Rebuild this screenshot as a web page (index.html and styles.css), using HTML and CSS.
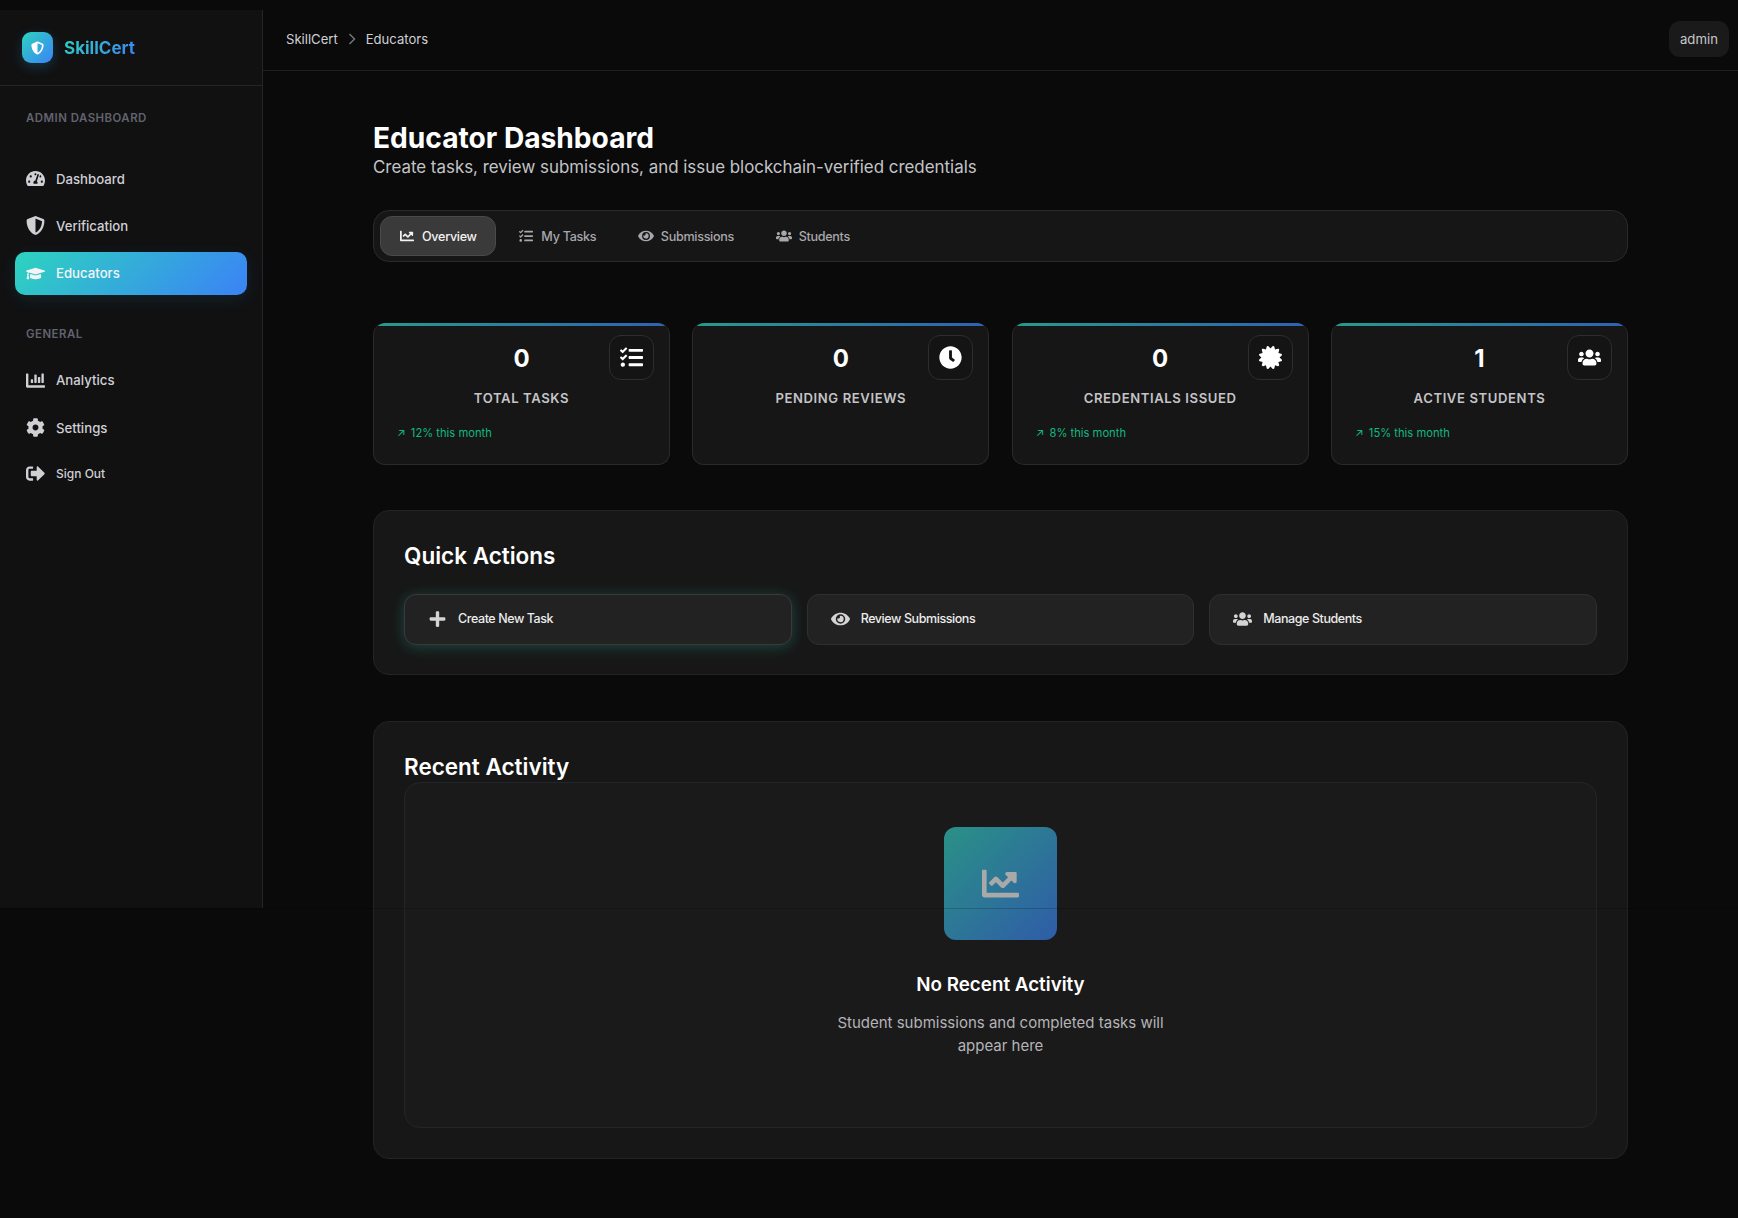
FILE: index.html
```html
<!DOCTYPE html>
<html lang="en">
<head>
    <meta charset="UTF-8">
    <meta name="viewport" content="width=device-width, initial-scale=1.0">
    <title>SkillCert - Educator Dashboard</title>
    <link rel="stylesheet" href="styles.css">
</head>
<body>

    <!-- Icon sprite -->
    <svg class="sprite" xmlns="http://www.w3.org/2000/svg">
        <symbol id="i-shield" viewBox="0 0 512 512"><path d="M466.5 83.7l-192-80a48.15 48.15 0 0 0-36.9 0l-192 80C27.7 91.1 16 108.6 16 128c0 198.5 114.5 335.7 221.5 380.3 11.8 4.9 25.1 4.9 36.9 0C360.1 472.6 496 349.3 496 128c0-19.4-11.7-36.9-29.5-44.3zM256.1 446.3l-.1-381 175.9 73.3c-3.3 151.4-82.1 261.1-175.8 307.7z"/></symbol>
        <symbol id="i-gauge" viewBox="0 0 576 512"><path d="M288 32C128.94 32 0 160.94 0 320c0 52.8 14.25 102.26 39.06 144.8 5.61 9.62 16.3 15.2 27.44 15.2h443c11.14 0 21.83-5.58 27.44-15.2C561.75 422.26 576 372.8 576 320c0-159.06-128.94-288-288-288zm0 64c14.71 0 26.58 10.13 30.32 23.65-1.11 2.26-2.64 4.23-3.45 6.67l-9.22 27.67c-5.13 3.49-10.97 6.01-17.64 6.01-17.67 0-32-14.33-32-32S270.33 96 288 96zM96 384c-17.67 0-32-14.33-32-32s14.33-32 32-32 32 14.33 32 32-14.33 32-32 32zm48-160c-17.67 0-32-14.33-32-32s14.33-32 32-32 32 14.33 32 32-14.33 32-32 32zm246.77-72.41l-61.33 184C343.13 347.33 352 364.54 352 384c0 11.72-3.38 22.55-8.88 32H232.88c-5.5-9.45-8.88-20.28-8.88-32 0-33.94 26.5-61.43 59.9-63.59l61.34-184.01c4.17-12.56 17.73-19.45 30.36-15.17 12.57 4.19 19.35 17.79 15.17 30.36zm14.66 57.2l15.52-46.55c3.47-1.29 7.13-2.23 11.05-2.23 17.67 0 32 14.33 32 32s-14.33 32-32 32c-11.38-.01-20.89-6.28-26.57-15.22zM480 384c-17.67 0-32-14.33-32-32s14.33-32 32-32 32 14.33 32 32-14.33 32-32 32z"/></symbol>
        <symbol id="i-cap" viewBox="0 0 640 512"><path d="M622.34 153.2L343.4 67.5c-15.2-4.67-31.6-4.67-46.79 0L17.66 153.2c-23.54 7.23-23.54 38.36 0 45.59l48.63 14.94c-10.67 13.19-17.23 29.28-17.88 46.9C38.78 266.15 32 276.11 32 288c0 10.78 5.68 19.85 13.86 25.65L20.33 428.53C18.11 438.52 25.71 448 35.94 448h56.11c10.24 0 17.84-9.48 15.62-19.47L82.14 313.65C90.32 307.85 96 298.78 96 288c0-11.57-6.47-21.25-15.66-26.87.76-15.02 8.44-28.3 20.69-36.72L296.6 284.5c9.06 2.78 26.44 6.25 46.79 0l278.95-85.7c23.55-7.24 23.55-38.36 0-45.6zM352.79 315.09c-28.53 8.76-52.84 3.92-65.59 0l-145.02-44.55L128 384c0 35.35 85.96 64 192 64s192-28.65 192-64l-14.18-113.47-145.03 44.56z"/></symbol>
        <symbol id="i-bars" viewBox="0 0 512 512"><path d="M332.8 320h38.4c6.4 0 12.8-6.4 12.8-12.8V172.8c0-6.4-6.4-12.8-12.8-12.8h-38.4c-6.4 0-12.8 6.4-12.8 12.8v134.4c0 6.4 6.4 12.8 12.8 12.8zm96 0h38.4c6.4 0 12.8-6.4 12.8-12.8V76.8c0-6.4-6.4-12.8-12.8-12.8h-38.4c-6.4 0-12.8 6.4-12.8 12.8v230.4c0 6.4 6.4 12.8 12.8 12.8zm-288 0h38.4c6.4 0 12.8-6.4 12.8-12.8v-70.4c0-6.4-6.4-12.8-12.8-12.8h-38.4c-6.4 0-12.8 6.4-12.8 12.8v70.4c0 6.4 6.4 12.8 12.8 12.8zm96 0h38.4c6.4 0 12.8-6.4 12.8-12.8V108.8c0-6.4-6.4-12.8-12.8-12.8h-38.4c-6.4 0-12.8 6.4-12.8 12.8v198.4c0 6.4 6.4 12.8 12.8 12.8zM496 384H64V80c0-8.84-7.16-16-16-16H16C7.16 64 0 71.16 0 80v336c0 17.67 14.33 32 32 32h464c8.84 0 16-7.16 16-16v-32c0-8.84-7.16-16-16-16z"/></symbol>
        <symbol id="i-cog" viewBox="0 0 512 512"><path d="M487.4 315.7l-42.6-24.6c4.3-23.2 4.3-47 0-70.2l42.6-24.6c4.9-2.8 7.1-8.6 5.5-14-11.1-35.6-30-67.8-54.7-94.6-3.8-4.1-10-5.1-14.8-2.3L380.8 110c-17.9-15.4-38.5-27.3-60.8-35.1V25.8c0-5.6-3.9-10.5-9.4-11.7-36.7-8.2-74.3-7.8-109.2 0-5.5 1.2-9.4 6.1-9.4 11.7V75c-22.2 7.9-42.8 19.8-60.8 35.1L88.7 85.5c-4.9-2.8-11-1.9-14.8 2.3-24.7 26.7-43.6 58.9-54.7 94.6-1.7 5.4.6 11.2 5.5 14L67.3 221c-4.3 23.2-4.3 47 0 70.2l-42.6 24.6c-4.9 2.8-7.1 8.6-5.5 14 11.1 35.6 30 67.8 54.7 94.6 3.8 4.1 10 5.1 14.8 2.3l42.6-24.6c17.9 15.4 38.5 27.3 60.8 35.1v49.2c0 5.6 3.9 10.5 9.4 11.7 36.7 8.2 74.3 7.8 109.2 0 5.5-1.2 9.4-6.1 9.4-11.7v-49.2c22.2-7.9 42.8-19.8 60.8-35.1l42.6 24.6c4.9 2.8 11 1.9 14.8-2.3 24.7-26.7 43.6-58.9 54.7-94.6 1.5-5.5-.7-11.3-5.6-14.1zM256 336c-44.1 0-80-35.9-80-80s35.9-80 80-80 80 35.9 80 80-35.9 80-80 80z"/></symbol>
        <symbol id="i-signout" viewBox="0 0 512 512"><path d="M497 273L329 441c-15 15-41 4.5-41-17v-96H152c-13.3 0-24-10.7-24-24v-96c0-13.3 10.7-24 24-24h136V88c0-21.4 25.9-32 41-17l168 168c9.3 9.4 9.3 24.6 0 34zM192 436v-40c0-6.6-5.4-12-12-12H96c-17.7 0-32-14.3-32-32V160c0-17.7 14.3-32 32-32h84c6.6 0 12-5.4 12-12V76c0-6.6-5.4-12-12-12H96c-53 0-96 43-96 96v192c0 53 43 96 96 96h84c6.6 0 12-5.4 12-12z"/></symbol>
        <symbol id="i-chart" viewBox="0 0 512 512"><path d="M496 384H64V80c0-8.84-7.16-16-16-16H16C7.16 64 0 71.16 0 80v336c0 17.67 14.33 32 32 32h464c8.84 0 16-7.16 16-16v-32c0-8.84-7.16-16-16-16zM464 96H345.94c-21.38 0-32.09 25.85-16.97 40.97l32.4 32.4L288 242.75l-73.37-73.37c-12.5-12.5-32.76-12.5-45.25 0l-68.69 68.69c-6.25 6.25-6.25 16.38 0 22.63l22.62 22.62c6.25 6.25 16.38 6.25 22.63 0L192 237.25l73.37 73.37c12.5 12.5 32.76 12.5 45.25 0l96-96 32.4 32.4c15.12 15.12 40.97 4.41 40.97-16.97V112c.01-8.84-7.15-16-15.99-16z"/></symbol>
        <symbol id="i-tasks" viewBox="0 0 512 512"><path d="M139.61 35.5a12 12 0 0 0-17 0L58.93 98.81l-22.7-22.12a12 12 0 0 0-17 0L3.53 92.41a12 12 0 0 0 0 17l47.59 47.4a12.78 12.78 0 0 0 17.61 0l15.59-15.62L156.52 69a12.09 12.09 0 0 0 .09-17zm0 159.19a12 12 0 0 0-17 0l-63.68 63.72-22.7-22.1a12 12 0 0 0-17 0L3.53 252a12 12 0 0 0 0 17L51 316.5a12.77 12.77 0 0 0 17.6 0l15.7-15.69 72.2-72.22a12 12 0 0 0 .09-16.9zM64 368c-26.49 0-48.59 21.5-48.59 48S37.53 464 64 464a48 48 0 0 0 0-96zm432 16H208a16 16 0 0 0-16 16v32a16 16 0 0 0 16 16h288a16 16 0 0 0 16-16v-32a16 16 0 0 0-16-16zm0-320H208a16 16 0 0 0-16 16v32a16 16 0 0 0 16 16h288a16 16 0 0 0 16-16V80a16 16 0 0 0-16-16zm0 160H208a16 16 0 0 0-16 16v32a16 16 0 0 0 16 16h288a16 16 0 0 0 16-16v-32a16 16 0 0 0-16-16z"/></symbol>
        <symbol id="i-eye" viewBox="0 0 576 512"><path d="M572.52 241.4C518.29 135.59 410.93 64 288 64S57.68 135.64 3.48 241.41a32.35 32.35 0 0 0 0 29.19C57.71 376.41 165.07 448 288 448s230.32-71.64 284.52-177.41a32.35 32.35 0 0 0 0-29.19zM288 400a144 144 0 1 1 144-144 143.93 143.93 0 0 1-144 144zm0-240a95.31 95.31 0 0 0-25.31 3.79 47.85 47.85 0 0 1-66.9 66.9A95.78 95.78 0 1 0 288 160z"/></symbol>
        <symbol id="i-users" viewBox="0 0 640 512"><path d="M96 224c35.3 0 64-28.7 64-64s-28.7-64-64-64-64 28.7-64 64 28.7 64 64 64zm448 0c35.3 0 64-28.7 64-64s-28.7-64-64-64-64 28.7-64 64 28.7 64 64 64zm32 32h-64c-17.6 0-33.5 7.1-45.1 18.6 40.3 22.1 68.9 62 75.1 109.4h66c17.7 0 32-14.3 32-32v-32c0-35.3-28.7-64-64-64zm-256 0c61.9 0 112-50.1 112-112S381.9 32 320 32 208 82.1 208 144s50.1 112 112 112zm76.8 32h-8.3c-20.8 10-43.9 16-68.5 16s-47.6-6-68.5-16h-8.3C179.6 288 128 339.6 128 403.2V432c0 26.5 21.5 48 48 48h288c26.5 0 48-21.5 48-48v-28.8c0-63.6-51.6-115.2-115.2-115.2zm-223.7-13.4C161.5 263.1 145.6 256 128 256H64c-35.3 0-64 28.7-64 64v32c0 17.7 14.3 32 32 32h65.9c6.3-47.4 34.9-87.3 75.2-109.4z"/></symbol>
        <symbol id="i-clock" viewBox="0 0 512 512"><path d="M256,8C119,8,8,119,8,256S119,504,256,504,504,393,504,256,393,8,256,8Zm92.49,313h0l-20,25a16,16,0,0,1-22.49,2.5h0l-67-49.72a40,40,0,0,1-15-31.23V112a16,16,0,0,1,16-16h32a16,16,0,0,1,16,16V256l58,42.5A16,16,0,0,1,348.49,321Z"/></symbol>
        <symbol id="i-cert" viewBox="0 0 512 512"><path d="M458.622 255.92l45.985-45.005c13.708-12.977 7.316-36.039-10.664-40.339l-62.65-15.99 17.661-62.015c4.991-17.838-11.829-34.663-29.661-29.671l-61.994 17.667-15.984-62.671C337.085.197 313.765-6.276 300.99 7.228L256 53.57 211.011 7.229c-12.63-13.351-36.047-7.234-40.325 10.668l-15.984 62.671-61.995-17.667C74.87 57.907 58.056 74.738 63.046 92.572l17.661 62.015-62.65 15.99C.069 174.878-6.31 197.944 7.392 210.915l45.985 45.005-45.985 45.004c-13.708 12.977-7.316 36.039 10.664 40.339l62.65 15.99-17.661 62.015c-4.991 17.838 11.829 34.663 29.661 29.671l61.994-17.667 15.984 62.671c4.439 18.575 27.696 24.018 40.325 10.668L256 458.61l44.989 46.001c12.5 13.488 35.987 7.486 40.325-10.668l15.984-62.671 61.994 17.667c17.836 4.994 34.651-11.837 29.661-29.671l-17.661-62.015 62.65-15.99c17.987-4.302 24.366-27.367 10.664-40.339l-45.984-45.004z"/></symbol>
        <symbol id="i-plus" viewBox="0 0 448 512"><path d="M416 208H272V64c0-17.67-14.33-32-32-32h-32c-17.67 0-32 14.33-32 32v144H32c-17.67 0-32 14.33-32 32v32c0 17.67 14.33 32 32 32h144v144c0 17.67 14.33 32 32 32h32c17.67 0 32-14.33 32-32V304h144c17.67 0 32-14.33 32-32v-32c0-17.67-14.33-32-32-32z"/></symbol>
    </svg>

    <div class="layout">

        <!-- Sidebar -->
        <aside class="sidebar">
            <div class="brand">
                <span class="brand-logo"><svg class="icon"><use href="#i-shield"/></svg></span>
                <span class="brand-name">SkillCert</span>
            </div>
            <nav class="nav">
                <div class="nav-label">Admin Dashboard</div>
                <a class="nav-item" href="#"><svg class="icon"><use href="#i-gauge"/></svg>Dashboard</a>
                <a class="nav-item" href="#"><svg class="icon"><use href="#i-shield"/></svg>Verification</a>
                <a class="nav-item active" href="#"><svg class="icon"><use href="#i-cap"/></svg>Educators</a>
                <div class="nav-label general">General</div>
                <a class="nav-item" href="#"><svg class="icon"><use href="#i-bars"/></svg>Analytics</a>
                <a class="nav-item" href="#"><svg class="icon"><use href="#i-cog"/></svg>Settings</a>
                <a class="nav-item small" href="#"><svg class="icon"><use href="#i-signout"/></svg>Sign Out</a>
            </nav>
        </aside>

        <div class="main">
            <!-- Top bar -->
            <header class="topbar">
                <div class="crumbs">
                    <span>SkillCert</span>
                    <svg class="crumb-sep" viewBox="0 0 8 12"><path d="M1.5 1l5 5-5 5"/></svg>
                    <span>Educators</span>
                </div>
                <span class="user-pill">admin</span>
            </header>

            <main class="content">
                <h1 class="page-title">Educator Dashboard</h1>
                <p class="page-sub">Create tasks, review submissions, and issue blockchain-verified credentials</p>

                <div class="tabs">
                    <button class="tab active"><svg class="icon"><use href="#i-chart"/></svg>Overview</button>
                    <button class="tab"><svg class="icon"><use href="#i-tasks"/></svg>My Tasks</button>
                    <button class="tab"><svg class="icon"><use href="#i-eye"/></svg>Submissions</button>
                    <button class="tab"><svg class="icon"><use href="#i-users"/></svg>Students</button>
                </div>

                <div class="stats">
                    <div class="stat">
                        <span class="stat-icon"><svg class="icon"><use href="#i-tasks"/></svg></span>
                        <div class="stat-value">0</div>
                        <div class="stat-label">Total Tasks</div>
                        <div class="stat-trend"><span class="trend-arrow">↗</span> 12% this month</div>
                    </div>
                    <div class="stat">
                        <span class="stat-icon"><svg class="icon"><use href="#i-clock"/></svg></span>
                        <div class="stat-value">0</div>
                        <div class="stat-label">Pending Reviews</div>
                    </div>
                    <div class="stat">
                        <span class="stat-icon"><svg class="icon"><use href="#i-cert"/></svg></span>
                        <div class="stat-value">0</div>
                        <div class="stat-label">Credentials Issued</div>
                        <div class="stat-trend"><span class="trend-arrow">↗</span> 8% this month</div>
                    </div>
                    <div class="stat">
                        <span class="stat-icon"><svg class="icon"><use href="#i-users"/></svg></span>
                        <div class="stat-value">1</div>
                        <div class="stat-label">Active Students</div>
                        <div class="stat-trend"><span class="trend-arrow">↗</span> 15% this month</div>
                    </div>
                </div>

                <section class="panel quick">
                    <h2 class="panel-title">Quick Actions</h2>
                    <div class="actions">
                        <button class="action primary"><svg class="icon"><use href="#i-plus"/></svg>Create New Task</button>
                        <button class="action"><svg class="icon"><use href="#i-eye"/></svg>Review Submissions</button>
                        <button class="action"><svg class="icon"><use href="#i-users"/></svg>Manage Students</button>
                    </div>
                </section>

                <section class="panel recent">
                    <h2 class="panel-title">Recent Activity</h2>
                    <div class="empty">
                        <span class="empty-icon"><svg class="icon"><use href="#i-chart"/></svg></span>
                        <h3 class="empty-title">No Recent Activity</h3>
                        <p class="empty-text">Student submissions and completed tasks will appear here</p>
                    </div>
                </section>
            </main>
        </div>
    </div>

    <!-- Faint seam that crosses the page where the sidebar ends -->
    <div class="seam"></div>

</body>
</html>
```

FILE: styles.css
```css
* {
    box-sizing: border-box;
}
body {
    margin: 0;
    background-color: #0a0a0a;
    color: #fff;
    font-family: Inter, "Liberation Sans", sans-serif;
    position: relative;
}
.sprite {
    display: none;
}
.icon {
    fill: currentColor;
    display: block;
}
.layout {
    display: flex;
    align-items: flex-start;
    padding-top: 10px;
}

/* Sidebar */
.sidebar {
    width: 263px;
    height: 898px;
    flex-shrink: 0;
    background-color: #111112;
    border-right: 1px solid #24252c;
}
.brand {
    height: 76px;
    display: flex;
    align-items: center;
    gap: 11px;
    padding-left: 22px;
    border-bottom: 1px solid #24252c;
}
.brand-logo {
    width: 31px;
    height: 31px;
    border-radius: 9px;
    background: linear-gradient(135deg, #2dd4bf, #3b82f6);
    box-shadow: 0 4px 12px rgba(45, 160, 200, 0.25);
    display: flex;
    align-items: center;
    justify-content: center;
    color: #fff;
}
.brand-logo .icon {
    width: 13px;
    height: 14px;
}
.brand-name {
    font-size: 17px;
    font-weight: 700;
    background: linear-gradient(135deg, #2dd4bf, #3b82f6);
    -webkit-background-clip: text;
    background-clip: text;
    color: transparent;
}
.nav {
    padding: 24px 15px 0;
}
.nav-label {
    font-size: 11.4px;
    font-weight: 600;
    letter-spacing: 0.5px;
    text-transform: uppercase;
    color: #62636e;
    padding-left: 11px;
    line-height: 16px;
    margin-bottom: 31px;
}
.nav-label.general {
    margin-top: 31px;
    margin-bottom: 17px;
}
.nav-item {
    height: 43px;
    margin-bottom: 4.4px;
    display: flex;
    align-items: center;
    gap: 11px;
    padding-left: 11px;
    border-radius: 10px;
    color: #cfcfd4;
    font-size: 13.2px;
    font-weight: 500;
    text-decoration: none;
}
.nav-item .icon {
    width: 19px;
    height: 19px;
}
.nav-item.small {
    font-size: 12px;
    margin-top: -2px;
}
.nav-item.active {
    color: #f4f4f6;
    background: linear-gradient(135deg, #2dd4bf, #3b82f6);
    box-shadow: 0 4px 16px rgba(45, 160, 200, 0.12);
}

/* Top bar */
.main {
    flex: 1;
    min-width: 0;
}
.topbar {
    height: 61px;
    display: flex;
    align-items: center;
    justify-content: space-between;
    padding: 0 9px 3px 23px;
    border-bottom: 1px solid #1e1f24;
}
.crumbs {
    display: flex;
    align-items: center;
    gap: 10px;
    font-size: 13.1px;
    color: #cfcfd4;
}
.crumb-sep {
    width: 8px;
    height: 12px;
    fill: none;
    stroke: #77787f;
    stroke-width: 1.4;
}
.user-pill {
    background-color: #1a1a1a;
    color: #c8c8cc;
    font-size: 13.2px;
    border-radius: 11px;
    padding: 9px 11px;
    line-height: 18px;
}

/* Content */
.content {
    padding: 50px 110px 59px 110px;
}
.page-title {
    margin: 0;
    font-size: 28.15px;
    font-weight: 700;
    line-height: 35px;
}
.page-sub {
    margin: -1px 0 31px;
    font-size: 16.9px;
    line-height: 24px;
    color: #c4c4c8;
}
.tabs {
    height: 52px;
    display: flex;
    align-items: center;
    gap: 3.6px;
    padding: 0 6px;
    background-color: #161616;
    border: 1px solid #2a2a2a;
    border-radius: 16px;
}
.tab {
    height: 40px;
    display: flex;
    align-items: center;
    gap: 7px;
    padding: 0 18px;
    background: none;
    border: 1px solid transparent;
    border-radius: 12px;
    color: #a8a8ac;
    font: 500 12.6px Inter, "Liberation Sans", sans-serif;
    letter-spacing: -0.3px;
}
.tab .icon {
    width: 16px;
    height: 14px;
}
.tab.active {
    background-color: #3a3a3a;
    border-color: #4a4a4a;
    color: #f2f2f2;
}

/* Stat cards */
.stats {
    display: grid;
    grid-template-columns: repeat(4, 1fr);
    gap: 22.4px;
    margin-top: 61px;
}
.stat {
    position: relative;
    height: 142px;
    padding-top: 21px;
    background-color: #161616;
    border: 1px solid #2a2a2a;
    border-top: 0;
    border-radius: 12px;
    text-align: center;
    overflow: hidden;
}
.stat::before {
    content: "";
    position: absolute;
    top: 0;
    left: 0;
    right: 0;
    height: 3px;
    background: linear-gradient(90deg, #2dd4bf, #3b82f6);
    opacity: 0.7;
}
.stat-icon {
    position: absolute;
    top: 12px;
    right: 15px;
    width: 45px;
    height: 45px;
    display: flex;
    align-items: center;
    justify-content: center;
    background-color: #141414;
    border: 1px solid #2e2e2e;
    border-radius: 12px;
    color: #fff;
}
.stat-icon .icon {
    width: 23px;
    height: 23px;
}
.stat-value {
    font-size: 24px;
    font-weight: 700;
    line-height: 30px;
}
.stat-label {
    margin-top: 15px;
    font-size: 13.1px;
    font-weight: 600;
    letter-spacing: 0.6px;
    line-height: 18px;
    text-transform: uppercase;
    color: #c4c4c8;
}
.stat-trend {
    margin-top: 18px;
    padding-left: 23px;
    text-align: left;
    font-size: 11.2px;
    line-height: 16px;
    color: #10b981;
}
.trend-arrow {
    margin-right: 2px;
}

/* Panels */
.panel {
    background-color: #171717;
    border: 1px solid #232323;
    border-radius: 16px;
    padding: 30px;
}
.panel-title {
    margin: 0;
    font-size: 22.5px;
    font-weight: 600;
    line-height: 30px;
}
.quick {
    height: 165px;
    margin-top: 45px;
}
.actions {
    display: grid;
    grid-template-columns: repeat(3, 1fr);
    gap: 15px;
    margin-top: 23px;
}
.action {
    height: 51px;
    display: flex;
    align-items: center;
    gap: 11px;
    padding: 0 23px 2px;
    background-color: #222;
    border: 1px solid #2f2f2f;
    border-radius: 12px;
    color: #ececec;
    font: 500 12.5px Inter, "Liberation Sans", sans-serif;
    letter-spacing: -0.42px;
}
.action .icon {
    width: 19px;
    height: 18px;
    color: #d4d4d4;
}
.action.primary {
    border-color: #3a3a3a;
    box-shadow: 0 2px 14px rgba(45, 212, 191, 0.26);
}
.recent {
    height: 438px;
    margin-top: 46px;
}
.empty {
    height: 346px;
    padding-top: 44px;
    background-color: #1a1a1a;
    border: 1px solid #22262c;
    border-radius: 16px;
    text-align: center;
}
.empty-icon {
    width: 113px;
    height: 113px;
    margin: 0 auto;
    display: flex;
    align-items: center;
    justify-content: center;
    border-radius: 12px;
    background: linear-gradient(135deg, #2a9186, #2f5ca8);
    color: #a9a9a9;
}
.empty-icon .icon {
    width: 37px;
    height: 37px;
}
.empty-title {
    margin: 31px 0 0;
    font-size: 18.8px;
    font-weight: 600;
    line-height: 28px;
}
.empty-text {
    width: 350px;
    margin: 12px auto 0;
    font-size: 15px;
    line-height: 23px;
    color: #b4b4b8;
}

/* Seam */
.seam {
    position: absolute;
    top: 908px;
    left: 0;
    right: 0;
    height: 1px;
    background-color: rgba(0, 0, 0, 0.18);
}
```
